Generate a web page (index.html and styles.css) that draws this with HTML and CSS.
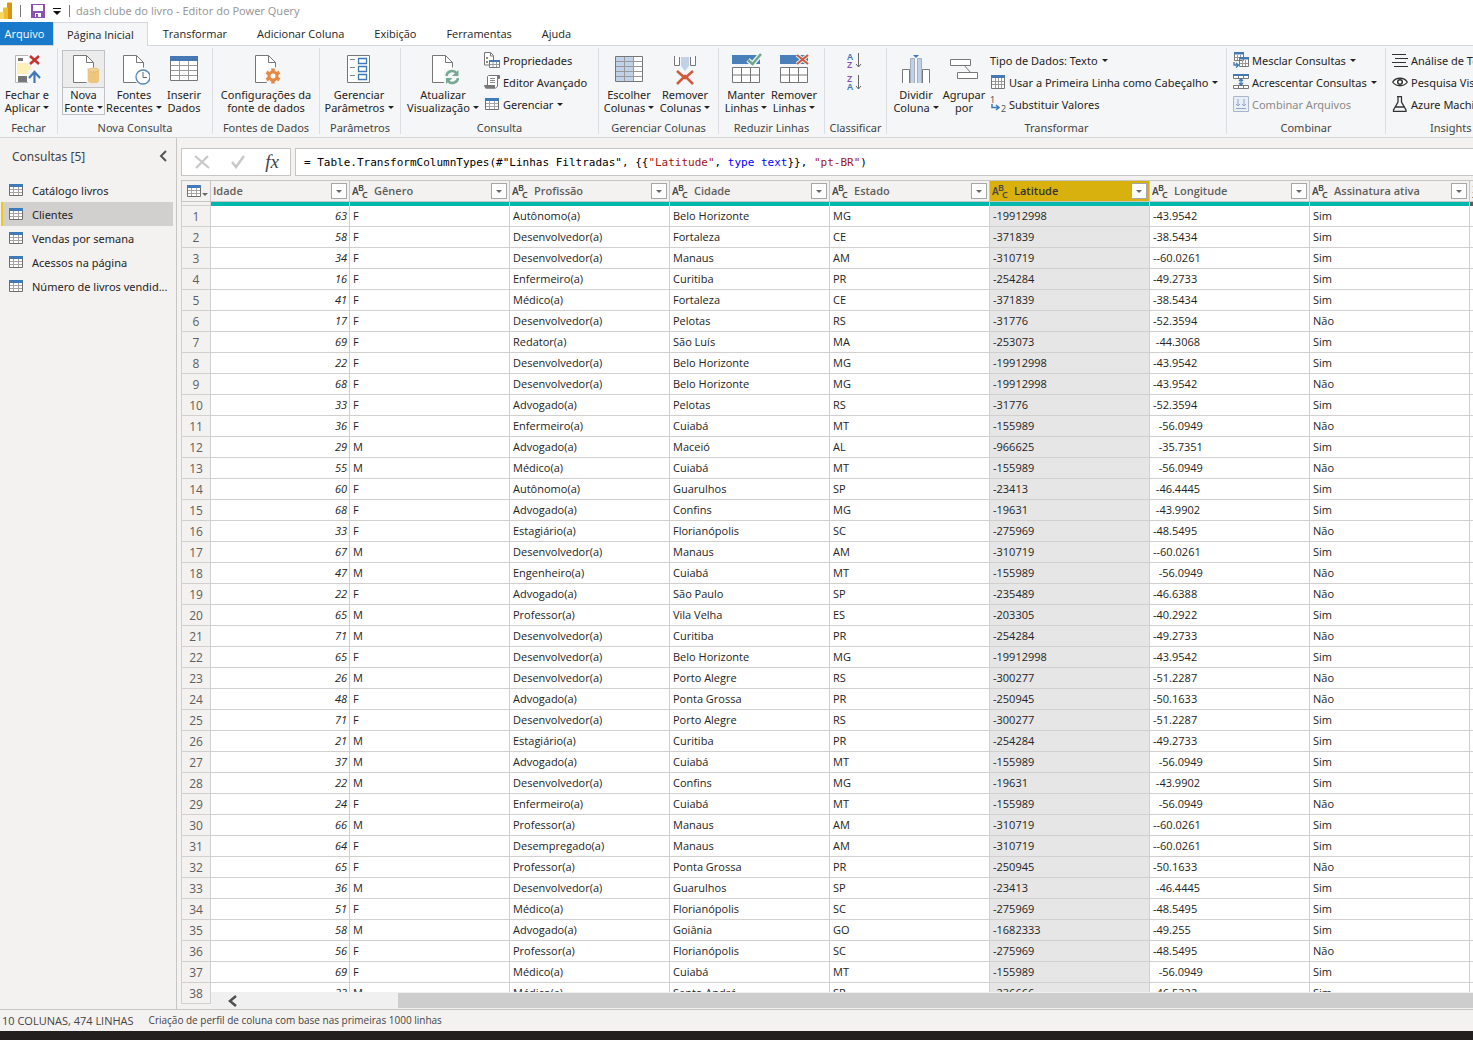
FILE: index.html
```html
<!DOCTYPE html>
<html lang="pt-BR">
<head>
<meta charset="utf-8">
<title>dash clube do livro - Editor do Power Query</title>
<link rel="stylesheet" href="styles.css">
</head>
<body>
<svg class="sprite" aria-hidden="true">
  <symbol id="page" viewBox="0 0 32 32"><path d="M5.500 2.500h13l7 7v20h-20z" fill="#fff"/><path d="M18.500 29.500h-13v-27h13l7 7v5M18.500 2.500v7h7" fill="none" stroke="#777"/></symbol>
  <symbol id="table" viewBox="0 0 14 12"><path d="M.5.5h13v11H.5z" fill="#fff" stroke="#6f6f6f"/><path d="M4.500 3v8M9.500 3v8M1 5.500h12M1 8.500h12" stroke="#a5a5a5" fill="none"/><path d="M0 0h14v3H0z" fill="#3f7abb"/></symbol>
</svg>

<header class="titlebar">
  <svg class="logo" width="12" height="17" viewBox="0 0 12 17"><path d="M7 1.500A1 1 0 0 1 8 .5h3a1 1 0 0 1 1 1V17H7z" fill="#d8930f"/><path d="M3 6.500a1 1 0 0 1 1-1h3a1 1 0 0 1 1 1V17H3z" fill="#f0bd2e"/><path d="M0 10h3a1 1 0 0 1 1 1v6H0z" fill="#f6d667"/></svg>
  <span class="tick"></span>
  <button class="plain save" aria-label="Salvar"><svg width="14" height="14" viewBox="0 0 14 14"><path d="M0 0h14v14H0z" fill="#8a52b5"/><path d="M2 1h10v6H2zM4 9h6v4H4z" fill="#fff"/><path d="M5 10h2v3H5z" fill="#8a52b5"/></svg></button>
  <button class="plain qat" aria-label="Personalizar"><svg width="8" height="7" viewBox="0 0 8 7"><path d="M0 0h8v1H0zM0 3h8L4 7z" fill="#111"/></svg></button>
  <span class="tick"></span>
  <span class="title">dash clube do livro - Editor do Power Query</span>
</header>

<nav class="tabs">
  <button class="tab file">Arquivo</button>
  <button class="tab active">Página Inicial</button>
  <button class="tab">Transformar</button>
  <button class="tab">Adicionar Coluna</button>
  <button class="tab">Exibição</button>
  <button class="tab">Ferramentas</button>
  <button class="tab">Ajuda</button>
</nav>

<section class="ribbon">
  <div class="group g-fechar">
    <div class="tools">
      <button class="big w54"><svg viewBox="0 0 32 32"><path d="M4.500 2.500h13v27h-13z" fill="#fff" stroke="#b5b5b5"/><path d="M6 10h11l4 6-4 5H6z" fill="#fff0b8"/><path d="M7 5h5v3H7zM7 23h9v6H7z" fill="#777"/><path d="M17 0h13v13H17zM17 17h13v15H17z" fill="#f5f6f7"/><path d="M19 3l9 8M28 3l-9 8" stroke="#c8302c" stroke-width="2.500"/><path d="M23.500 30V19M18 25l5.500-6 5.500 6" fill="none" stroke="#3f7ab5" stroke-width="2.200"/></svg><span>Fechar e<br>Aplicar<i class="caret"></i></span></button>
    </div><h2>Fechar</h2>
  </div>
  <div class="group g-nova">
    <div class="tools">
      <button class="big split"><svg viewBox="0 0 32 32"><use href="#page"/><path d="M19 15h13v17H19z" fill="#ececed"/><path d="M20 17v11c0 3 11 3 11 0V17z" fill="#edc57c"/><ellipse cx="25.500" cy="17" rx="5.500" ry="2" fill="#f0d19a" stroke="#dfb265" stroke-width=".6"/></svg><span>Nova<br>Fonte<i class="caret"></i></span></button>
      <button class="big w58"><svg viewBox="0 0 32 32"><use href="#page"/><circle cx="25" cy="24" r="7" fill="#fff" stroke="#5586b8" stroke-width="1.300"/><path d="M25 19v5.500h4" fill="none" stroke="#666"/></svg><span>Fontes<br>Recentes<i class="caret"></i></span></button>
      <button class="big w42"><svg viewBox="0 0 32 32"><path d="M2.500 3.500h27v24h-27z" fill="#fff" stroke="#777"/><path d="M11.500 8v19M20.500 8v19M3 12.500h26M3 17.500h26M3 22.500h26" stroke="#999" fill="none"/><path d="M2 3h28v5H2z" fill="#4679b3"/></svg><span>Inserir<br>Dados</span></button>
    </div><h2>Nova Consulta</h2>
  </div>
  <div class="group g-fontes">
    <div class="tools">
      <button class="big w100"><svg viewBox="0 0 32 32"><use href="#page"/><circle cx="23" cy="23" r="9" fill="#f5f6f7"/><g stroke="#e58a42" stroke-width="3.500"><path d="M23 15.500v15M16.500 19.200l13 7.600M16.500 26.800l13-7.600"/></g><circle cx="23" cy="23" r="4" fill="#fff" stroke="#e58a42" stroke-width="3"/></svg><span>Configurações da<br>fonte de dados</span></button>
    </div><h2>Fontes de Dados</h2>
  </div>
  <div class="group g-param">
    <div class="tools">
      <button class="big w78"><svg viewBox="0 0 32 32"><path d="M4.500 2.500h22v27h-22z" fill="#fff" stroke="#777"/><path d="M7 6.500h5M7 14.500h5M7 22.500h5" stroke="#888"/><path d="M15.500 5.500h8v5h-8zM15.500 13.500h8v5h-8zM15.500 21.500h8v5h-8z" fill="none" stroke="#3f79b9" stroke-width="1.300"/></svg><span>Gerenciar<br>Parâmetros<i class="caret"></i></span></button>
    </div><h2>Parâmetros</h2>
  </div>
  <div class="group g-consulta">
    <div class="tools">
      <button class="big w78"><svg viewBox="0 0 32 32"><use href="#page"/><path d="M17 16h15v16H17z" fill="#f5f6f7"/><path d="M19.500 23c.5-5 7-7 10.500-2.500M31 25c-.5 5-7 7-10.500 2.500" fill="none" stroke="#77a893" stroke-width="2.500"/><path d="M31.500 17v6H25zM19 31v-6h6.500z" fill="#77a893"/></svg><span>Atualizar<br>Visualização<i class="caret"></i></span></button>
      <div class="stack">
        <button class="small"><svg viewBox="0 0 16 16"><path d="M.5.500h6l3 3v9.500h-9z" fill="#fff" stroke="#777"/><path d="M6.500 1v3h3" fill="none" stroke="#777"/><path d="M2 5h2v2H2zM2 9h2v2H2z" fill="#888"/><path d="M5.500 8.500h10v7h-10z" fill="#fff" stroke="#777"/><path d="M9 10v5M12.500 10v5M6 12.500h9" stroke="#999"/><path d="M5 8h11v2H5z" fill="#4679b3"/></svg>Propriedades</button>
        <button class="small"><svg viewBox="0 0 16 16"><path d="M3.500 11V2.500l1-1h11v3h-2v8l-2 1.500H2L.8 12z" fill="#fff" stroke="#777"/><path d="M0 11h11v3.500H1.500z" fill="#777"/><path d="M13 1h2.500v3.500H13z" fill="#777"/><path d="M6 4.500h5M6 6.500h5M6 8.500h5" stroke="#888"/></svg>Editor Avançado</button>
        <button class="small"><svg class="mini" viewBox="0 0 14 12"><use href="#table"/></svg>Gerenciar<i class="caret"></i></button>
      </div>
    </div><h2>Consulta</h2>
  </div>
  <div class="group g-colunas">
    <div class="tools">
      <button class="big w54"><svg viewBox="0 0 32 32"><path d="M2.500 3.500h27v25h-27z" fill="#fff"/><path d="M3 4h18v24H3z" fill="#bfd2ea"/><path d="M11.500 4v24M20.500 4v24M3 8.500h26M3 13.500h26M3 18.500h26M3 23.500h26" stroke="#999" fill="none"/><path d="M2.500 3.500h27v25h-27z" fill="none" stroke="#777"/></svg><span>Escolher<br>Colunas<i class="caret"></i></span></button>
      <button class="big w58"><svg viewBox="0 0 32 32"><path d="M5.500 3v9.500h5V4M26.500 3v9.500h-5V4" fill="#fff" stroke="#777"/><path d="M12 4h8v9l-4 5-4-5z" fill="#bfd2ea"/><path d="M8 18l8 7 8-7M8 31l8-8 8 8" fill="none" stroke="#d05a3d" stroke-width="2.500"/></svg><span>Remover<br>Colunas<i class="caret"></i></span></button>
    </div><h2>Gerenciar Colunas</h2>
  </div>
  <div class="group g-linhas">
    <div class="tools">
      <button class="big w48"><svg viewBox="0 0 32 32"><path d="M2 2h28v9H2z" fill="#4a80ba"/><path d="M2.500 14.500h27v15h-27zM11.500 14.500v15M20.500 14.500v15M3 22h26" fill="#fff" stroke="#777"/><path d="M18 7l4.500 4L31 1" fill="none" stroke="#f5f6f7" stroke-width="5"/><path d="M18 7l4.500 4L31 1" fill="none" stroke="#6ea58c" stroke-width="2.500"/></svg><span>Manter<br>Linhas<i class="caret"></i></span></button>
      <button class="big w48"><svg viewBox="0 0 32 32"><path d="M2 2h28v9H2z" fill="#4a80ba"/><path d="M2.500 14.500h27v15h-27zM11.500 14.500v15M20.500 14.500v15M3 22h26" fill="#fff" stroke="#777"/><path d="M19 2l11 9M30 2l-11 9" stroke="#f5f6f7" stroke-width="4"/><path d="M19 2l11 9M30 2l-11 9" stroke="#d05a3d" stroke-width="2.200"/></svg><span>Remover<br>Linhas<i class="caret"></i></span></button>
    </div><h2>Reduzir Linhas</h2>
  </div>
  <div class="group g-class">
    <div class="tools">
      <div class="stack">
        <button class="small sort" aria-label="Classificar em ordem crescente"><svg viewBox="0 0 16 17"><text class="az blue" x="0" y="8">A</text><text class="az purple" x="0" y="16">Z</text><path d="M11.500 1v14M9 12l2.500 3 2.500-3" fill="none" stroke="#666"/></svg></button>
        <button class="small sort" aria-label="Classificar em ordem decrescente"><svg viewBox="0 0 16 17"><text class="az purple" x="0" y="8">Z</text><text class="az blue" x="0" y="16">A</text><path d="M11.500 1v14M9 12l2.500 3 2.500-3" fill="none" stroke="#666"/></svg></button>
      </div>
    </div><h2>Classificar</h2>
  </div>
  <div class="group g-transf">
    <div class="tools">
      <button class="big w48"><svg viewBox="0 0 32 32"><path d="M2.500 30V16.500h7V30M22.500 30V16.500h7V30" fill="#fff" stroke="#777"/><path d="M11 5h3v25h-3zM18 5h3v25h-3z" fill="#bfd2ea"/><path d="M10.500 30V5.500h4V30M17.500 30V5.500h4V30" fill="none" stroke="#a5adb8"/><path d="M13 2h6l-3 3z" fill="#3f79b9"/></svg><span>Dividir<br>Coluna<i class="caret"></i></span></button>
      <button class="big w48"><svg viewBox="0 0 32 32"><path d="M16 12l7 8" stroke="#777"/><path d="M2.500 6.500h20v6h-20zM9.500 19.500h20v6h-20z" fill="#fff" stroke="#777"/></svg><span>Agrupar<br>por</span></button>
      <div class="stack">
        <button class="small">Tipo de Dados: Texto<i class="caret"></i></button>
        <button class="small"><svg viewBox="0 0 16 16"><path d="M1.500 1.500h13v13h-13z" fill="#fff" stroke="#777"/><path d="M5.500 4v10M8.500 4v10M11.500 4v10M2 7.500h12M2 10.500h12" stroke="#999"/><path d="M1 1h14v3H1z" fill="#4679b3"/></svg>Usar a Primeira Linha como Cabeçalho<i class="caret"></i></button>
        <button class="small"><svg viewBox="0 0 16 16"><text class="num" x="0" y="7">1</text><text class="num" x="11" y="16">2</text><path d="M2 8v3.500h6M6 9l3 2.500L6 14" fill="none" stroke="#3f79b9" stroke-width="1.500"/></svg>Substituir Valores</button>
      </div>
    </div><h2>Transformar</h2>
  </div>
  <div class="group g-comb">
    <div class="tools">
      <div class="stack">
        <button class="small"><svg viewBox="0 0 16 16"><path d="M1.500.5h9v8h-9zM6.500 5.500h9v9h-9z" fill="#fff" stroke="#777"/><path d="M4.500 3v5M7.500 3v3M2 5.500h4M9.500 8v6M12.500 8v6M7 11.500h8" stroke="#999"/><path d="M1 0h10v2.500H1zM6 5h10v2.500H6z" fill="#4679b3"/><path d="M1 10v3h4M3 11l2.500 2L3 15.500" fill="none" stroke="#3f79b9" stroke-width="1.300"/></svg>Mesclar Consultas<i class="caret"></i></button>
        <button class="small"><svg viewBox="0 0 16 16"><path d="M.5 1.500h15v3H.5zM.5 11.500h15v3H.5zM5.500 2v3M10.500 2v3M5.500 11v4M10.500 11v4" fill="#fff" stroke="#777"/><path d="M0 0h16v2H0z" fill="#4679b3"/><path d="M8 5v6M6 7l2-2 2 2M6 9l2 2 2-2" fill="none" stroke="#3f79b9" stroke-width="1.300"/></svg>Acrescentar Consultas<i class="caret"></i></button>
        <button class="small" disabled><svg viewBox="0 0 16 16"><path d="M.5.500h15v15H.5z" fill="#e9eef6" stroke="#a9b6c9"/><path d="M5 3v7M3 8l2 2 2-2M11 3v7M9 8l2 2 2-2M3 12.500h10" fill="none" stroke="#8ba7cb"/></svg>Combinar Arquivos</button>
      </div>
    </div><h2>Combinar</h2>
  </div>
  <div class="group g-insights">
    <div class="tools">
      <div class="stack">
        <button class="small"><svg viewBox="0 0 16 16"><path d="M0 2.500h14M3 6.500h13M0 10.500h14M2 14.500h14" stroke="#333"/></svg>Análise de Texto</button>
        <button class="small"><svg viewBox="0 0 16 16"><path d="M.7 8C4 3 12 3 15.300 8 12 13 4 13 .7 8z" fill="#fff" stroke="#333" stroke-width="1.300"/><circle cx="8" cy="8" r="2.300" fill="#fff" stroke="#333" stroke-width="1.500"/></svg>Pesquisa Visual</button>
        <button class="small"><svg viewBox="0 0 16 16"><path d="M5 .7h5M6 1v5L1.500 14v1.300h12.500V14L9.500 6V1M3.500 11h9" fill="none" stroke="#333" stroke-width="1.300"/></svg>Azure Machine Learning</button>
      </div>
    </div><h2>Insights de IA</h2>
  </div>
</section>

<main class="work">
  <aside class="queries">
    <div class="qhead"><h1>Consultas [5]</h1><button class="plain" aria-label="Recolher"><svg width="8" height="12" viewBox="0 0 8 12"><path d="M7 1L2 6l5 5" fill="none" stroke="#555" stroke-width="2"/></svg></button></div>
    <ul>
      <li><a href="#"><svg viewBox="0 0 14 12"><use href="#table"/></svg>Catálogo livros</a></li>
      <li><a href="#" class="on" aria-current="true"><svg viewBox="0 0 14 12"><use href="#table"/></svg>Clientes</a></li>
      <li><a href="#"><svg viewBox="0 0 14 12"><use href="#table"/></svg>Vendas por semana</a></li>
      <li><a href="#"><svg viewBox="0 0 14 12"><use href="#table"/></svg>Acessos na página</a></li>
      <li><a href="#"><svg viewBox="0 0 14 12"><use href="#table"/></svg>Número de livros vendid...</a></li>
    </ul>
  </aside>
  <section class="editor">
    <div class="formula">
      <div class="fbuttons">
        <button class="plain" aria-label="Cancelar"><svg width="16" height="14" viewBox="0 0 16 14"><path d="M1 1l14 12M14 1L2 13" stroke="#c8c8c8" stroke-width="2.200"/></svg></button>
        <button class="plain" aria-label="Confirmar"><svg width="14" height="14" viewBox="0 0 14 14"><path d="M1 7l4 5 8-11" fill="none" stroke="#c8c8c8" stroke-width="2.500"/></svg></button>
        <button class="plain fx" aria-label="Inserir etapa">fx</button>
      </div>
      <div class="ftext" role="textbox" contenteditable="true" spellcheck="false" aria-label="Fórmula">= Table.TransformColumnTypes(#"Linhas Filtradas", {{<span class="str">"Latitude"</span>, <span class="kw">type</span> <span class="kw">text</span>}}, <span class="str">"pt-BR"</span>)</div>
    </div>
    <div class="grid">
      <table>
        <colgroup><col class="c-num"><col class="c-age"><col><col><col><col><col><col><col><col></colgroup>
        <thead>
          <tr id="heads"></tr>
          <tr class="quality"><td></td><td></td><td></td><td></td><td></td><td></td><td></td><td></td><td></td><td class="mixed"></td></tr>
        </thead>
        <tbody id="rows"></tbody>
      </table>
      <div class="hscroll"><button class="plain" aria-label="Rolar para a esquerda"><svg width="10" height="12" viewBox="0 0 10 12"><path d="M9 1L3 6l6 5" fill="none" stroke="#505050" stroke-width="2.500"/></svg></button><div class="thumb"></div></div>
    </div>
  </section>
</main>

<footer class="status"><span>10 COLUNAS, 474 LINHAS</span><span class="note">Criação de perfil de coluna com base nas primeiras 1000 linhas</span></footer>
<div class="desk"></div>
<script src="app.js"></script>
</body>
</html>
```
FILE: styles.css
```css
* { box-sizing: border-box; }
body {
  margin: 0;
  height: 100vh;
  display: flex;
  flex-direction: column;
  overflow: hidden;
  background: #f3f2f1;
  color: #252423;
  font: 11px/13px "Noto Sans", sans-serif;
}
button { font: inherit; color: inherit; margin: 0; padding: 0; border: 0; background: none; }
h1, h2, ul { margin: 0; padding: 0; font-weight: 400; list-style: none; }
svg { flex: none; display: block; }
.sprite { position: absolute; width: 0; height: 0; }
.plain { display: flex; align-items: center; justify-content: center; }

/* title bar */
.titlebar { flex: none; height: 22px; display: flex; align-items: center; background: #fff; }
.titlebar .logo, .titlebar .title { margin-bottom: 2px; }
.tick { width: 1px; height: 12px; background: #777; margin-left: 8px; }
.save { margin-left: 10px; }
.qat { margin-left: 8px; }
.qat + .tick { margin-left: 8px; }
.title { margin-left: 6px; color: #999; }

/* tabs */
.tabs { flex: none; height: 24px; display: flex; background: #fff; border-bottom: 1px solid #d5d7da; font-family: "Open Sans", sans-serif; }
.tab { padding: 0 15px; white-space: nowrap; }
.tab.file { width: 53px; padding: 0 4px 0 0; background: #1979ca; color: #fff; margin-bottom: -1px; height: 23px; }
.tab.active { padding: 0 13px 1px; background: #f5f6f7; border: 1px solid #d5d7da; border-bottom: 0; margin-bottom: -1px; }

/* ribbon */
.ribbon { flex: none; height: 92px; display: flex; background: #f5f6f7; border-bottom: 1px solid #d5d7da; padding: 2px 0 3px; overflow: hidden; }
.group { flex: none; display: flex; flex-direction: column; border-right: 1px solid #dcdee1; padding-top: 1px; }
.group h2 { font-size: 11px; text-align: center; color: #444; padding-top: 6px; white-space: nowrap; }
.tools { height: 66px; display: flex; padding-left: 3px; }
.g-fechar { width: 58px; }
.g-fechar .tools { padding-left: 0; }
.g-nova { width: 155px; }
.g-nova .tools { padding-left: 4px; }
.g-fontes { width: 107px; }
.g-param { width: 81px; }
.g-param .tools { padding-left: 0; }
.g-consulta { width: 198px; }
.g-colunas { width: 120px; }
.g-linhas { width: 106px; }
.g-class { width: 62px; }
.g-class .tools { padding-left: 20px; }
.g-transf { width: 340px; }
.g-transf .tools { padding-left: 5px; }
.g-comb { width: 159px; }
.g-insights { width: 160px; }
.g-comb .tools, .g-insights .tools { padding-left: 4px; }
.big { display: flex; flex-direction: column; align-items: center; white-space: nowrap; height: 66px; padding-top: 4px; }
.big svg { width: 32px; height: 32px; }
.big span { padding-top: 3px; }
.w42 { width: 42px; }
.w48 { width: 48px; }
.w54 { width: 54px; }
.w58 { width: 58px; }
.w78 { width: 78px; }
.w100 { width: 100px; }
.split { width: 43px; height: 65px; margin-top: 1px; padding-top: 2px; border: 1px solid #bfc1c4; background: linear-gradient(#ececed 36px, #bfc1c4 36px, #bfc1c4 37px, #f5f6f7 37px); }
.caret { display: inline-block; border: 3px solid transparent; border-top-color: #222; border-bottom: 0; margin-left: 3px; vertical-align: 3px; }
.stack { padding-left: 2px; }
.small { display: flex; align-items: center; gap: 3px; height: 22px; white-space: nowrap; }
.small svg { width: 16px; height: 16px; }
.small svg.mini { width: 14px; height: 12px; margin: 0 1px; }
.small .caret { vertical-align: 0; margin-left: 1px; }
.small:disabled { color: #8a8a8a; }
.small.sort svg { height: 17px; }
.az { font: 600 9px "Noto Sans", sans-serif; }
.blue { fill: #3f79b9; }
.purple { fill: #8a52b5; }
.num { font: 9px "Noto Sans", sans-serif; fill: #555; }

/* workspace */
.work { flex: 1; min-height: 0; display: flex; }
.queries { flex: none; width: 177px; border-right: 1px solid #c8c6c4; }
.qhead { display: flex; align-items: center; justify-content: space-between; height: 40px; padding: 0 9px 4px 12px; }
.qhead h1 { font-size: 12px; color: #444; }
.queries a { display: flex; align-items: center; gap: 9px; height: 24px; margin: 0 3px 0 1px; padding-left: 8px; color: inherit; text-decoration: none; white-space: nowrap; }
.queries a svg { width: 14px; height: 12px; }
.queries a.on { background: #d1d0cf; border-left: 2px solid #f2c811; padding-left: 6px; }
.editor { flex: 1; min-width: 0; display: flex; flex-direction: column; padding: 10px 0 0 4px; }
.formula { flex: none; display: flex; gap: 4px; height: 28px; margin-bottom: 4px; }
.fbuttons { flex: none; width: 110px; display: flex; align-items: center; justify-content: space-between; padding: 0 11px 0 12px; background: #fff; border: 1px solid #c8c6c4; }
.fx { font: italic 19px "Liberation Serif", serif; color: #444; }
.ftext { flex: 1; min-width: 0; background: #fff; border: 1px solid #c8c6c4; border-right: 0; padding: 0 8px; font: 11px/28px "DejaVu Sans Mono", monospace; color: #000; white-space: nowrap; overflow: hidden; }
.str { color: #a31515; }
.kw { color: #0000ff; }

/* data grid */
.grid { flex: 1; min-height: 0; position: relative; overflow: hidden; }
table { table-layout: fixed; width: 1449px; border-spacing: 0; border-collapse: separate; font-family: "Open Sans", sans-serif; }
col { width: 160px; }
.c-num { width: 30px; }
.c-age { width: 139px; }
th, td { height: 21px; padding: 0 3px 2px; border: 0 solid #d2d0ce; border-width: 0 1px 1px 0; text-align: left; font-weight: 400; white-space: pre; overflow: hidden; background: #fff; color: #252423; }
tr > :first-child { border-left-width: 1px; }
thead th { height: 22px; border-top-width: 1px; border-color: #c8c6c4; background: #f3f2f1; padding: 0 2px; }
thead th.sel { background: #d9b10e; }
.head { display: flex; align-items: center; gap: 5px; font-weight: 600; color: #605e5c; }
.head .name { flex: 1; padding-bottom: 2px; }
.head svg { width: 17px; height: 16px; }
.abc { font: 600 9px "Noto Sans", sans-serif; fill: #4c4a48; }
.abc .first { font-size: 10px; }
.sel .head { color: #333; }
.filter { width: 16px; height: 16px; display: flex; align-items: center; justify-content: center; background: #fff; border: 1px solid #a6a6a6; }
.filter .caret, .corner .caret { margin: 0; border-top-color: #666; }
.corner { display: flex; align-items: center; gap: 1px; padding-left: 3px; }
.corner svg { width: 14px; height: 12px; }
.corner .caret { align-self: flex-end; margin-bottom: 1px; }
.quality td { height: 4px; padding: 0; border-bottom: 0; background: #01b8aa; }
.quality td:first-child { background: #f3f2f1; border-bottom: 1px solid #d2d0ce; }
.quality td.mixed { background: #605e5c; }
tbody th { background: #f3f2f1; color: #605e5c; text-align: center; font-size: 12px; padding: 0; }
td.age { text-align: right; font-style: italic; padding-right: 2px; }
td.lat { background: #e6e6e6; }
.hscroll { position: absolute; left: 30px; right: 0; bottom: 0; height: 17px; display: flex; background: #f0f0f0; padding: 1px 0; }
.hscroll button { width: 41px; }
.thumb { flex: 1; margin-left: 146px; background: #cdcdcd; }

.status { flex: none; height: 22px; border-top: 1px solid #c8c6c4; display: flex; align-items: center; gap: 15px; padding: 0 2px; color: #444; font-family: "Open Sans", sans-serif; }
.note { font-size: 10px; }
.desk { flex: none; height: 9px; background: #241f1f; }
```
FILE: app.js
```js
const places = {
  "Belo Horizonte": ["MG", "-19912998", "-43.9542"],
  "Fortaleza": ["CE", "-371839", "-38.5434"],
  "Manaus": ["AM", "-310719", "--60.0261"],
  "Curitiba": ["PR", "-254284", "-49.2733"],
  "Pelotas": ["RS", "-31776", "-52.3594"],
  "São Luís": ["MA", "-253073", " -44.3068"],
  "Cuiabá": ["MT", "-155989", "  -56.0949"],
  "Maceió": ["AL", "-966625", "  -35.7351"],
  "Guarulhos": ["SP", "-23413", " -46.4445"],
  "Confins": ["MG", "-19631", " -43.9902"],
  "Florianópolis": ["SC", "-275969", "-48.5495"],
  "São Paulo": ["SP", "-235489", "-46.6388"],
  "Vila Velha": ["ES", "-203305", "-40.2922"],
  "Porto Alegre": ["RS", "-300277", "-51.2287"],
  "Ponta Grossa": ["PR", "-250945", "-50.1633"],
  "Goiânia": ["GO", "-1682333", "-49.255"],
  "Santo André": ["SP", "-236666", "-46.5322"]
};

const clients = `63|F|Autônomo(a)|Belo Horizonte|Sim
58|F|Desenvolvedor(a)|Fortaleza|Sim
34|F|Desenvolvedor(a)|Manaus|Sim
16|F|Enfermeiro(a)|Curitiba|Sim
41|F|Médico(a)|Fortaleza|Sim
17|F|Desenvolvedor(a)|Pelotas|Não
69|F|Redator(a)|São Luís|Sim
22|F|Desenvolvedor(a)|Belo Horizonte|Sim
68|F|Desenvolvedor(a)|Belo Horizonte|Não
33|F|Advogado(a)|Pelotas|Sim
36|F|Enfermeiro(a)|Cuiabá|Não
29|M|Advogado(a)|Maceió|Sim
55|M|Médico(a)|Cuiabá|Não
60|F|Autônomo(a)|Guarulhos|Sim
68|F|Advogado(a)|Confins|Sim
33|F|Estagiário(a)|Florianópolis|Não
67|M|Desenvolvedor(a)|Manaus|Sim
47|M|Engenheiro(a)|Cuiabá|Não
22|F|Advogado(a)|São Paulo|Não
65|M|Professor(a)|Vila Velha|Sim
71|M|Desenvolvedor(a)|Curitiba|Não
65|F|Desenvolvedor(a)|Belo Horizonte|Sim
26|M|Desenvolvedor(a)|Porto Alegre|Não
48|F|Advogado(a)|Ponta Grossa|Não
71|F|Desenvolvedor(a)|Porto Alegre|Sim
21|M|Estagiário(a)|Curitiba|Sim
37|M|Advogado(a)|Cuiabá|Sim
22|M|Desenvolvedor(a)|Confins|Sim
24|F|Enfermeiro(a)|Cuiabá|Não
66|M|Professor(a)|Manaus|Sim
64|F|Desempregado(a)|Manaus|Sim
65|F|Professor(a)|Ponta Grossa|Não
36|M|Desenvolvedor(a)|Guarulhos|Sim
51|F|Médico(a)|Florianópolis|Sim
58|M|Advogado(a)|Goiânia|Sim
56|F|Professor(a)|Florianópolis|Não
69|F|Médico(a)|Cuiabá|Sim
23|M|Médico(a)|Santo André|Sim`.split("\n").map(line => line.split("|"));

const columns = ["Idade", "Gênero", "Profissão", "Cidade", "Estado", "Latitude", "Longitude", "Assinatura ativa", ""];

const textIcon = '<svg class="abc" viewBox="0 0 17 16" aria-hidden="true"><text class="first" x="0" y="12">A</text><text x="6" y="8">B</text><text x="10" y="15">C</text></svg>';
const anyIcon = '<svg class="abc" viewBox="0 0 17 16" aria-hidden="true"><text x="0" y="8">1</text><text x="6" y="8">2</text><text x="0" y="15">3</text></svg>';

document.getElementById("heads").innerHTML =
  '<th><div class="corner"><svg viewBox="0 0 14 12"><use href="#table"/></svg><i class="caret"></i></div></th>' +
  columns.map(name => {
    const icon = name === "Idade" ? "" : name ? textIcon : anyIcon;
    return `<th scope="col" class="${name === "Latitude" ? "sel" : ""}"><div class="head">${icon}<span class="name">${name}</span><button class="filter" aria-label="Filtrar ${name}"><i class="caret"></i></button></div></th>`;
  }).join("");

document.getElementById("rows").innerHTML = clients.map(([age, sex, job, city, active], i) => {
  const [state, lat, lon] = places[city];
  return `<tr><th scope="row">${i + 1}</th><td class="age">${age}</td><td>${sex}</td><td>${job}</td><td>${city}</td><td>${state}</td><td class="lat">${lat}</td><td>${lon}</td><td>${active}</td><td></td></tr>`;
}).join("");
```
